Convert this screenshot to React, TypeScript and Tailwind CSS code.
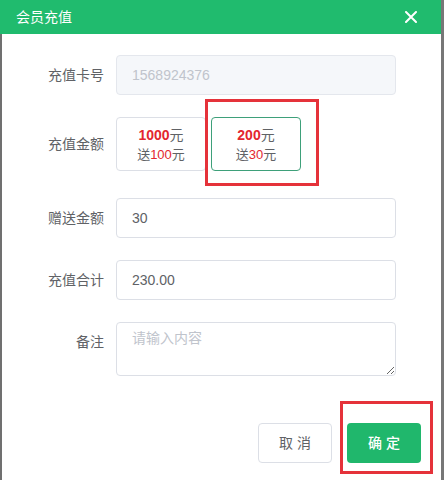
import React from "react";

const font = "font-['Liberation_Sans','Noto_Sans_CJK_SC',sans-serif]";

function Label({ children }: { children: React.ReactNode }) {
  return (
    <div className="w-[102px] shrink-0 pr-0 text-right text-[14px] text-[#606266] leading-[40px]">
      {children}
    </div>
  );
}

export default function App() {
  return (
    <div className={`${font} w-[444px] h-[480px] relative flex bg-white overflow-hidden`}>
      <div className="w-[441px] flex flex-col">
        <div className="h-[34px] bg-[#20bb6e] flex items-center justify-between pl-4 pr-[24px]">
          <span className="text-white text-[14px] leading-none">会员充值</span>
          <svg width="12" height="12" viewBox="0 0 12 12" fill="none">
            <path d="M1 1L11 11M11 1L1 11" stroke="white" strokeWidth="2" strokeLinecap="round" />
          </svg>
        </div>
        <div className="flex-1 border-l-2 border-[#707070] pt-[21px] flex flex-col">
          <div className="flex gap-3 h-[40px]">
            <Label>充值卡号</Label>
            <div className="w-[280px] h-[40px] rounded-[4px] border border-[#e4e7ed] bg-[#f5f7fa] px-[15px] flex items-center text-[14px] text-[#c0c4cc]">
              1568924376
            </div>
          </div>

          <div className="flex gap-3 mt-[22px] items-center h-[54px]">
            <Label>充值金额</Label>
            <div className="flex gap-[5px]">
              <div className="w-[90px] h-[54px] rounded-[4px] border border-[#dcdfe6] flex flex-col items-center justify-center pt-[2px]">
                <div className="text-[14px] leading-[19px] text-[#606266]">
                  <span className="font-bold text-[#e3262f]">1000</span>元
                </div>
                <div className="text-[13px] leading-[19px] text-[#606266]">
                  送<span className="text-[#e3262f]">100</span>元
                </div>
              </div>
              <div className="w-[90px] h-[54px] rounded-[4px] border border-[#3ea07a] flex flex-col items-center justify-center pt-[2px]">
                <div className="text-[14px] leading-[19px] text-[#606266]">
                  <span className="font-bold text-[#e3262f]">200</span>元
                </div>
                <div className="text-[13px] leading-[19px] text-[#606266]">
                  送<span className="text-[#e3262f]">30</span>元
                </div>
              </div>
            </div>
          </div>

          <div className="flex gap-3 mt-[27px] h-[40px]">
            <Label>赠送金额</Label>
            <div className="w-[280px] h-[40px] rounded-[4px] border border-[#dcdfe6] px-[15px] flex items-center text-[14px] text-[#606266]">
              30
            </div>
          </div>

          <div className="flex gap-3 mt-[22px] h-[40px]">
            <Label>充值合计</Label>
            <div className="w-[280px] h-[40px] rounded-[4px] border border-[#dcdfe6] px-[15px] flex items-center text-[14px] text-[#606266]">
              230.00
            </div>
          </div>

          <div className="flex gap-3 mt-[22px]">
            <Label>备注</Label>
            <textarea
              placeholder="请输入内容"
              className="w-[280px] h-[54px] rounded-[4px] border border-[#dcdfe6] px-[15px] py-[5px] text-[14px] leading-[21px] text-[#606266] placeholder:text-[#c0c4cc] outline-none resize"
            />
          </div>

          <div className="flex justify-end gap-[15px] mt-[47px] pr-[20px]">
            <button className="w-[74px] h-[40px] rounded-[4px] border border-[#dcdfe6] bg-white text-[14px] text-[#606266]">
              取 消
            </button>
            <button className="w-[74px] h-[40px] rounded-[4px] bg-[#20b76c] text-[14px] text-white font-medium">
              确 定
            </button>
          </div>
        </div>
      </div>
      <div className="w-[3px] bg-[#777777]" />

      <div className="absolute left-[205px] top-[99px] w-[114px] h-[87px] border-[3px] border-[#e5323a]" />
      <div className="absolute left-[340px] top-[401px] w-[93px] h-[73px] border-[3px] border-[#e5323a]" />
    </div>
  );
}
